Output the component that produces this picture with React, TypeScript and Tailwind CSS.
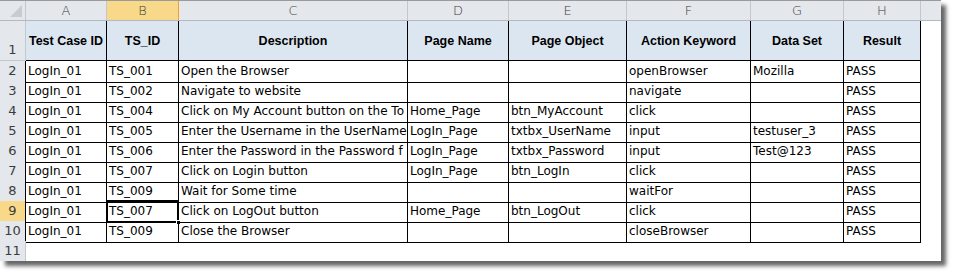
import React from "react";

const cols = ["A", "B", "C", "D", "E", "F", "G", "H"];
const heads = ["Test Case ID", "TS_ID", "Description", "Page Name", "Page Object", "Action Keyword", "Data Set", "Result"];

// description text is cut at the next filled cell, as the sheet shows it
const rows: string[][] = [
  ["LogIn_01", "TS_001", "Open the Browser", "", "", "openBrowser", "Mozilla", "PASS"],
  ["LogIn_01", "TS_002", "Navigate to website", "", "", "navigate", "", "PASS"],
  ["LogIn_01", "TS_004", "Click on My Account button on the To", "Home_Page", "btn_MyAccount", "click", "", "PASS"],
  ["LogIn_01", "TS_005", "Enter the Username in the UserName", "LogIn_Page", "txtbx_UserName", "input", "testuser_3", "PASS"],
  ["LogIn_01", "TS_006", "Enter the Password in the Password f", "LogIn_Page", "txtbx_Password", "input", "Test@123", "PASS"],
  ["LogIn_01", "TS_007", "Click on Login button", "LogIn_Page", "btn_LogIn", "click", "", "PASS"],
  ["LogIn_01", "TS_009", "Wait for Some time", "", "", "waitFor", "", "PASS"],
  ["LogIn_01", "TS_007", "Click on LogOut button", "Home_Page", "btn_LogOut", "click", "", "PASS"],
  ["LogIn_01", "TS_009", "Close the Browser", "", "", "closeBrowser", "", "PASS"],
];

const grid =
  "grid grid-cols-[26px_81px_72px_229px_101px_118px_124px_93px_77px_20px]";

const headerCell = "bg-[#e4e7eb] border-r border-[#c3c8ce] text-[#3c3c3c]";
const selHeader = "bg-[#f8d98a] border-r border-[#f0a030] text-[#3c3c3c]";

const App = () => {
  return (
    <div className="w-[955px] h-[274px] bg-white font-['DejaVu_Sans',sans-serif]">
      <div className="w-[941px] bg-white border-t border-[#9a9a9a] shadow-[5px_5px_4px_rgba(0,0,0,0.6)]">
        {/* column letters */}
        <div className={`${grid} h-[20px] border-b border-[#b3b9c0] text-[13px] leading-[19px]`}>
          <div className={`${headerCell} relative`}>
            <div className="absolute right-[3px] bottom-[3px] w-0 h-0 border-l-[12px] border-l-transparent border-b-[12px] border-b-[#c8ccd1]" />
          </div>
          {cols.map((c) => (
            <div key={c} className={`${c === "B" ? selHeader : headerCell} text-center font-extralight`}>
              {c}
            </div>
          ))}
          <div className="bg-[#e4e7eb]" />
        </div>

        {/* row 1 headers */}
        <div className={`${grid} h-[40px]`}>
          <div className="bg-[#e4e7eb] border-r border-b border-[#c3c8ce] text-[13px] text-[#3c3c3c] text-center flex items-end justify-center pb-[1px]">
            1
          </div>
          {heads.map((h) => (
            <div
              key={h}
              className="bg-[#dce6f1] border-r border-b border-black flex items-center justify-center font-['Liberation_Sans',sans-serif] text-[12.5px] font-bold text-black whitespace-nowrap pt-[1px]"
            >
              {h}
            </div>
          ))}
          <div />
        </div>

        {/* data rows */}
        {rows.map((r, i) => {
          const n = i + 2;
          const sel = n === 9;
          return (
            <div key={n} className={`${grid} h-[20px]`}>
              <div
                className={`${
                  sel ? "bg-[#f8d98a] border-b border-[#f0a030]" : "bg-[#e4e7eb] border-b border-[#c3c8ce]"
                } border-r border-r-black text-[13px] text-[#3c3c3c] text-center leading-[20px]`}
              >
                {n}
              </div>
              {r.map((v, j) => (
                <div
                  key={j}
                  className="relative border-r border-b border-black text-[12px] leading-[21px] pl-[2px] whitespace-nowrap text-black"
                >
                  {v}
                  {sel && j === 1 && (
                    <div className="absolute -left-[1px] -top-[1px] -right-[1px] -bottom-[1px] border-2 border-black">
                      <div className="absolute -right-[4px] -bottom-[4px] w-[5px] h-[5px] bg-black border border-white" />
                    </div>
                  )}
                </div>
              ))}
              <div />
            </div>
          );
        })}

        {/* row 11 */}
        <div className={`${grid} h-[20px]`}>
          <div className="bg-[#e4e7eb] border-r border-[#c3c8ce] text-[13px] text-[#3c3c3c] text-center leading-[20px]">
            11
          </div>
        </div>
      </div>
    </div>
  );
};

export default App;
